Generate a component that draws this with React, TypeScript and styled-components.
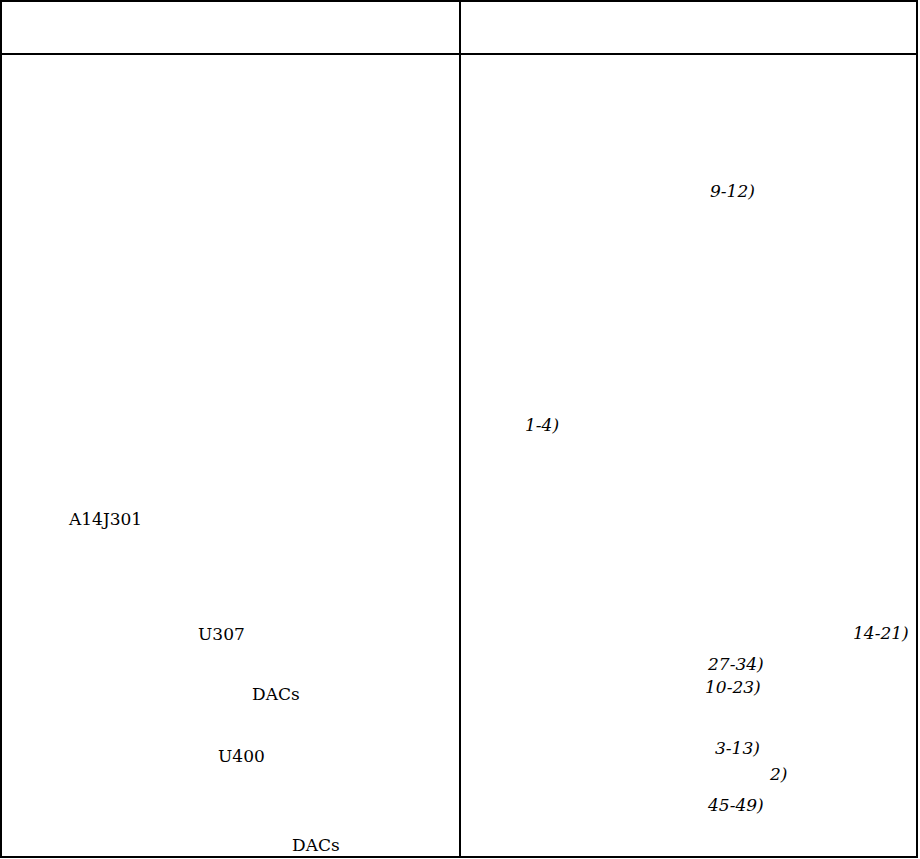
import React from "react";
import styled, { createGlobalStyle } from "styled-components";

const Global = createGlobalStyle`
  html, body { margin: 0; padding: 0; background: #ffffff; }
  body { font-family: "DejaVu Serif", "Liberation Serif", serif; color: #000; }
`;

const Table = styled.div`
  box-sizing: border-box;
  width: 918px;
  height: 858px;
  border: 2px solid #000;
  display: grid;
  grid-template-columns: 459px 455px;
  grid-template-rows: 53px 1fr;
`;

const HeaderCell = styled.div<{ $divider?: boolean }>`
  box-sizing: border-box;
  border-bottom: 2px solid #000;
  border-right: ${(p) => (p.$divider ? "2px solid #000" : "none")};
`;

const BodyCell = styled.div<{ $divider?: boolean }>`
  box-sizing: border-box;
  border-right: ${(p) => (p.$divider ? "2px solid #000" : "none")};
  display: flex;
  flex-direction: column;
  overflow: hidden;
`;

const Line = styled.div<{ $gap: number; $indent: number; $italic?: boolean }>`
  margin-top: ${(p) => p.$gap}px;
  padding-left: ${(p) => p.$indent}px;
  height: 20px;
  line-height: 20px;
  font-size: 17px;
  font-style: ${(p) => (p.$italic ? "italic" : "normal")};
  white-space: nowrap;
`;

type Item = { gap: number; indent: number; text: string };

const leftLines: Item[] = [
  { gap: 454, indent: 67, text: "A14J301" },
  { gap: 95, indent: 196, text: "U307" },
  { gap: 40, indent: 250, text: "DACs" },
  { gap: 42, indent: 216, text: "U400" },
  { gap: 69, indent: 290, text: "DACs" },
];

const rightLines: Item[] = [
  { gap: 126, indent: 249, text: "9-12)" },
  { gap: 214, indent: 64, text: "1-4)" },
  { gap: 188, indent: 392, text: "14-21)" },
  { gap: 11, indent: 247, text: "27-34)" },
  { gap: 3, indent: 244, text: "10-23)" },
  { gap: 41, indent: 254, text: "3-13)" },
  { gap: 6, indent: 309, text: "2)" },
  { gap: 11, indent: 247, text: "45-49)" },
];

export default function App() {
  return (
    <>
      <Global />
      <Table>
        <HeaderCell $divider />
        <HeaderCell />
        <BodyCell $divider>
          {leftLines.map((l, i) => (
            <Line key={i} $gap={l.gap} $indent={l.indent}>
              {l.text}
            </Line>
          ))}
        </BodyCell>
        <BodyCell>
          {rightLines.map((l, i) => (
            <Line key={i} $gap={l.gap} $indent={l.indent} $italic>
              {l.text}
            </Line>
          ))}
        </BodyCell>
      </Table>
    </>
  );
}
